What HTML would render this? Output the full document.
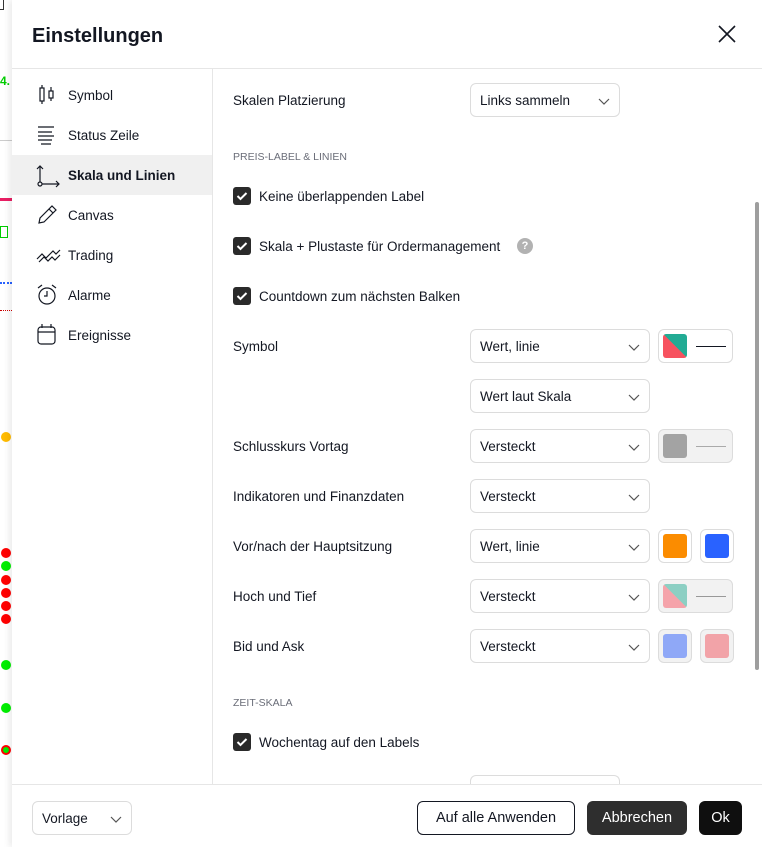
<!DOCTYPE html>
<html><head><meta charset="utf-8"><style>
*{box-sizing:border-box;margin:0;padding:0}
body{width:762px;height:847px;overflow:hidden;background:#fff;font-family:"Liberation Sans",sans-serif;color:#131722;position:relative;font-size:13.5px}
.a{position:absolute}
.t{position:absolute;white-space:nowrap;line-height:18px}
.sel{position:absolute;border:1px solid #dcdcdc;border-radius:6px;background:#fff;height:34px}
.sel span{position:absolute;left:9px;top:9px;white-space:nowrap}
.sel svg{position:absolute;right:9px;top:14px}
.cb{position:absolute;left:233px;width:18px;height:18px;background:#2a2a2a;border-radius:3px}
.cb svg{position:absolute;left:3px;top:4px}
.cbl{position:absolute;left:259px;white-space:nowrap}
.sw{position:absolute;border:1px solid #dcdcdc;border-radius:6px;height:34px}
.sw i{position:absolute;left:4px;top:4px;width:24px;height:24px;border-radius:3px}
.nav{position:absolute;left:12px;width:200px;height:40px}
.nav span{position:absolute;left:56px;top:13px}
.nav svg{position:absolute;left:24px;top:8px}
.dot{position:absolute;left:1px;width:10px;height:10px;border-radius:50%}
</style></head><body>
<div class="a" style="left:0;top:0;width:12px;height:847px;background:#fff"></div>
<div class="a" style="left:0;top:0;width:4px;height:10px;border:1px solid #333;border-top:none;border-left:none"></div>
<div class="t" style="left:0;top:72px;color:#0c0;font-weight:bold;font-size:12px">4.</div>
<div class="a" style="left:0;top:140px;width:12px;height:1px;background:#ccc"></div>
<div class="a" style="left:0;top:198px;width:12px;height:3px;background:#e91e63"></div>
<div class="a" style="left:0;top:226px;width:8px;height:12px;border:1px solid #0c0"></div>
<div class="a" style="left:0;top:282px;width:12px;height:0;border-top:2px dotted #2962ff"></div>
<div class="a" style="left:0;top:310px;width:12px;height:0;border-top:1px dotted #c00"></div>
<div class="dot" style="top:432px;background:#fb0"></div>
<div class="dot" style="top:548px;background:#f00"></div>
<div class="dot" style="top:561px;background:#0e0"></div>
<div class="dot" style="top:575px;background:#f00"></div>
<div class="dot" style="top:588px;background:#f00"></div>
<div class="dot" style="top:601px;background:#f00"></div>
<div class="dot" style="top:614px;background:#f00"></div>
<div class="dot" style="top:660px;background:#0e0"></div>
<div class="dot" style="top:703px;background:#0e0"></div>
<div class="dot" style="top:745px;border:2px solid #f00;background:#0e0"></div>
<div class="a" style="left:12px;top:0;width:750px;height:847px;background:#fff;box-shadow:-3px 0 6px rgba(0,0,0,.08)"></div>
<div class="t" style="left:32px;top:24px;font-size:20px;line-height:24px;font-weight:bold">Einstellungen</div>
<svg class="a" style="left:717px;top:24px" width="20" height="20"><path d="M2 2L18 18M18 2L2 18" stroke="#131722" stroke-width="1.6"/></svg>
<div class="a" style="left:12px;top:68px;width:750px;height:1px;background:#e6e6e6"></div>
<div class="a" style="left:212px;top:69px;width:1px;height:715px;background:#e6e6e6"></div>
<div class="a" style="left:12px;top:784px;width:750px;height:1px;background:#e6e6e6"></div>
<div class="nav" style="top:75px"><svg width="24" height="24" fill="none" stroke="#131722" stroke-width="1.2"><path d="M6 2v3M6 18v3M15 4v4M15 15v3"/><rect x="4" y="5" width="4" height="13"/><rect x="13" y="8" width="4" height="7"/></svg><span>Symbol</span></div>
<div class="nav" style="top:115px"><svg width="24" height="24" fill="none" stroke="#131722" stroke-width="1.2"><path d="M2 4h16M2 9h14M2 13h16M2 17h14M5 21h10"/></svg><span>Status Zeile</span></div>
<div class="nav" style="top:155px;background:#f0f0f0"><svg width="26" height="26" fill="none" stroke="#131722" stroke-width="1.2"><path d="M4 3v16M1 6l3-3 3 3M6 21h17M20 18l3 3-3 3"/><circle cx="4" cy="21" r="2"/></svg><span style="font-weight:bold">Skala und Linien</span></div>
<div class="nav" style="top:195px"><svg width="24" height="24" fill="none" stroke="#131722" stroke-width="1.2"><path d="M3 20l1-5L16 3l4 4L8 19z M13 6l4 4"/></svg><span>Canvas</span></div>
<div class="nav" style="top:235px"><svg width="26" height="24" fill="none" stroke="#131722" stroke-width="1.2"><path d="M1 16l5-5 4 4 4-4M3 19l5-5 4 4 4-4 3 3 5-5M14 11l3-3 3 3 4-4"/></svg><span>Trading</span></div>
<div class="nav" style="top:275px"><svg width="24" height="24" fill="none" stroke="#131722" stroke-width="1.2"><circle cx="11" cy="13" r="8"/><path d="M11 8v5h-3M2 5l4-3M20 5l-4-3"/></svg><span>Alarme</span></div>
<div class="nav" style="top:315px"><svg width="24" height="24" fill="none" stroke="#131722" stroke-width="1.2"><rect x="2" y="4" width="17" height="17" rx="3"/><path d="M2 9h17M6 1v4M15 1v4"/></svg><span>Ereignisse</span></div>
<div class="t" style="left:233px;top:92px">Skalen Platzierung</div>
<div class="sel" style="left:470px;top:83px;width:150px"><span>Links sammeln</span><svg width="12" height="8"><path d="M1 1l5 5 5-5" fill="none" stroke="#555" stroke-width="1.2"/></svg></div>
<div class="t" style="left:233px;top:148px;font-size:10.5px;color:#6a6d78">PREIS-LABEL &amp; LINIEN</div>
<div class="cb" style="top:187px"><svg width="12" height="10"><path d="M1.5 5l3 3 6-6" fill="none" stroke="#fff" stroke-width="2"/></svg></div><div class="cbl t" style="top:188px">Keine überlappenden Label</div>
<div class="cb" style="top:237px"><svg width="12" height="10"><path d="M1.5 5l3 3 6-6" fill="none" stroke="#fff" stroke-width="2"/></svg></div><div class="cbl t" style="top:238px">Skala + Plustaste für Ordermanagement</div>
<div class="a" style="left:517px;top:238px;width:16px;height:16px;border-radius:50%;background:#b2b2b2;color:#fff;font-size:11px;font-weight:bold;text-align:center;line-height:16px">?</div>
<div class="cb" style="top:287px"><svg width="12" height="10"><path d="M1.5 5l3 3 6-6" fill="none" stroke="#fff" stroke-width="2"/></svg></div><div class="cbl t" style="top:288px">Countdown zum nächsten Balken</div>
<div class="t" style="left:233px;top:338px">Symbol</div>
<div class="sel" style="left:470px;top:329px;width:180px"><span>Wert, linie</span><svg width="12" height="8"><path d="M1 1l5 5 5-5" fill="none" stroke="#555" stroke-width="1.2"/></svg></div>
<div class="sw" style="left:658px;top:329px;width:75px"><i style="background:linear-gradient(to bottom left,#22ab94 50%,#f7525f 50%)"></i><div class="a" style="left:37px;top:16px;width:30px;height:1px;background:#131722"></div></div>
<div class="sel" style="left:470px;top:379px;width:180px"><span>Wert laut Skala</span><svg width="12" height="8"><path d="M1 1l5 5 5-5" fill="none" stroke="#555" stroke-width="1.2"/></svg></div>
<div class="t" style="left:233px;top:438px">Schlusskurs Vortag</div>
<div class="sel" style="left:470px;top:429px;width:180px"><span>Versteckt</span><svg width="12" height="8"><path d="M1 1l5 5 5-5" fill="none" stroke="#555" stroke-width="1.2"/></svg></div>
<div class="sw" style="left:658px;top:429px;width:75px;background:#f2f2f2"><i style="background:#a3a3a3"></i><div class="a" style="left:37px;top:16px;width:30px;height:1px;background:#aaa"></div></div>
<div class="t" style="left:233px;top:488px">Indikatoren und Finanzdaten</div>
<div class="sel" style="left:470px;top:479px;width:180px"><span>Versteckt</span><svg width="12" height="8"><path d="M1 1l5 5 5-5" fill="none" stroke="#555" stroke-width="1.2"/></svg></div>
<div class="t" style="left:233px;top:538px">Vor/nach der Hauptsitzung</div>
<div class="sel" style="left:470px;top:529px;width:180px"><span>Wert, linie</span><svg width="12" height="8"><path d="M1 1l5 5 5-5" fill="none" stroke="#555" stroke-width="1.2"/></svg></div>
<div class="sw" style="left:658px;top:529px;width:34px"><i style="background:#fb8c00"></i></div>
<div class="sw" style="left:700px;top:529px;width:34px"><i style="background:#2962ff"></i></div>
<div class="t" style="left:233px;top:588px">Hoch und Tief</div>
<div class="sel" style="left:470px;top:579px;width:180px"><span>Versteckt</span><svg width="12" height="8"><path d="M1 1l5 5 5-5" fill="none" stroke="#555" stroke-width="1.2"/></svg></div>
<div class="sw" style="left:658px;top:579px;width:75px;background:#f2f2f2"><i style="background:linear-gradient(to bottom left,#8ccfc3 50%,#f5a3aa 50%)"></i><div class="a" style="left:37px;top:16px;width:30px;height:1px;background:#999"></div></div>
<div class="t" style="left:233px;top:638px">Bid und Ask</div>
<div class="sel" style="left:470px;top:629px;width:180px"><span>Versteckt</span><svg width="12" height="8"><path d="M1 1l5 5 5-5" fill="none" stroke="#555" stroke-width="1.2"/></svg></div>
<div class="sw" style="left:658px;top:629px;width:34px;background:#f2f2f2"><i style="background:#8fa8f7"></i></div>
<div class="sw" style="left:700px;top:629px;width:34px;background:#f2f2f2"><i style="background:#f2a3a8"></i></div>
<div class="t" style="left:233px;top:694px;font-size:10.5px;color:#6a6d78">ZEIT-SKALA</div>
<div class="cb" style="top:733px"><svg width="12" height="10"><path d="M1.5 5l3 3 6-6" fill="none" stroke="#fff" stroke-width="2"/></svg></div><div class="cbl t" style="top:734px">Wochentag auf den Labels</div>
<div class="a" style="left:470px;top:775px;width:150px;height:9px;border:1px solid #dcdcdc;border-bottom:none;border-radius:6px 6px 0 0"></div>
<div class="a" style="left:755px;top:202px;width:4px;height:468px;background:#9e9e9e;border-radius:2px"></div>
<div class="sel" style="left:32px;top:801px;width:100px"><span>Vorlage</span><svg width="12" height="8"><path d="M1 1l5 5 5-5" fill="none" stroke="#555" stroke-width="1.2"/></svg></div>
<div class="a" style="left:417px;top:801px;width:158px;height:34px;border:1px solid #131722;border-radius:6px;text-align:center;line-height:33px;font-size:14.5px">Auf alle Anwenden</div>
<div class="a" style="left:587px;top:801px;width:100px;height:34px;background:#2e2e2e;color:#fff;border-radius:6px;text-align:center;line-height:35px;font-size:14.5px">Abbrechen</div>
<div class="a" style="left:699px;top:801px;width:43px;height:34px;background:#0f0f0f;color:#fff;border-radius:6px;text-align:center;line-height:35px;font-size:14.5px">Ok</div>
</body></html>
